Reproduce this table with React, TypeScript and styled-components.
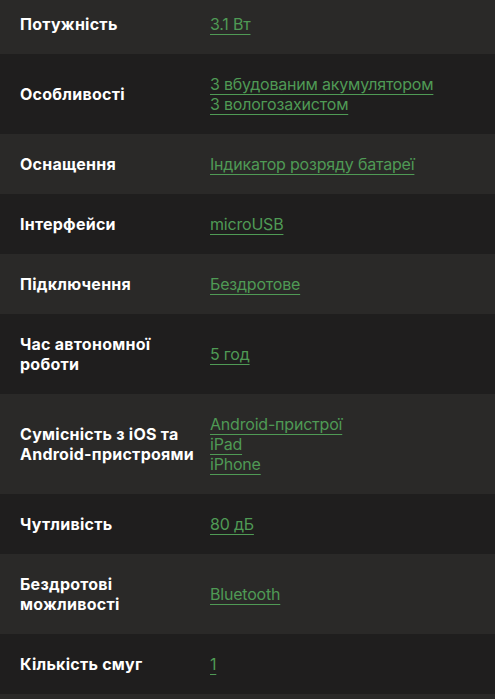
import React from "react";
import styled, { createGlobalStyle } from "styled-components";

const Global = createGlobalStyle`
  html, body { margin: 0; padding: 0; background: #2a2928; }
  body { font-family: Inter, "Noto Sans", sans-serif; -webkit-font-smoothing: antialiased; overflow: hidden; }
`;

const Table = styled.div`
  display: flex;
  flex-direction: column;
  margin-top: -6px;
`;

const Row = styled.div<{ $dark: boolean }>`
  display: grid;
  grid-template-columns: 180px 1fr;
  column-gap: 10px;
  align-items: center;
  padding: 20px 20px;
  background: ${(p) => (p.$dark ? "#1f1e1e" : "#2a2928")};
`;

const Label = styled.div`
  color: #ffffff;
  font-size: 16px;
  font-weight: 700;
  line-height: 20px;
  letter-spacing: 0.25px;
`;

const Values = styled.div`
  display: flex;
  flex-direction: column;
  align-items: flex-start;
`;

const Value = styled.a`
  color: #4f9a55;
  font-size: 16px;
  font-weight: 400;
  line-height: 20px;
  letter-spacing: -0.2px;
  text-decoration: underline;
  text-decoration-thickness: 1px;
  text-underline-offset: 4px;
  cursor: pointer;
`;

const rows: { label: string; values: string[] }[] = [
  { label: "Потужність", values: ["3.1 Вт"] },
  { label: "Особливості", values: ["З вбудованим акумулятором", "З вологозахистом"] },
  { label: "Оснащення", values: ["Індикатор розряду батареї"] },
  { label: "Інтерфейси", values: ["microUSB"] },
  { label: "Підключення", values: ["Бездротове"] },
  { label: "Час автономної роботи", values: ["5 год"] },
  { label: "Сумісність з iOS та Android-пристроями", values: ["Android-пристрої", "iPad", "iPhone"] },
  { label: "Чутливість", values: ["80 дБ"] },
  { label: "Бездротові можливості", values: ["Bluetooth"] },
  { label: "Кількість смуг", values: ["1"] },
  { label: "", values: [""] },
];

export default function App() {
  return (
    <>
      <Global />
      <Table>
        {rows.map((r, i) => (
          <Row key={i} $dark={i % 2 === 1}>
            <Label>{r.label}</Label>
            <Values>
              {r.values.map((v, j) => (
                <Value key={j}>{v}</Value>
              ))}
            </Values>
          </Row>
        ))}
      </Table>
    </>
  );
}
